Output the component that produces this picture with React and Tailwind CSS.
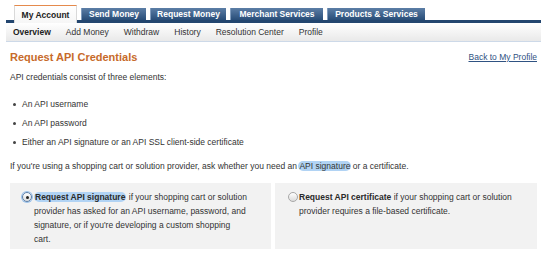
const tabs = [
  { label: "Send Money", w: "w-[65px]" },
  { label: "Request Money", w: "w-[76px]" },
  { label: "Merchant Services", w: "w-[93px]" },
  { label: "Products & Services", w: "w-[98px]" },
];

const subnav = ["Add Money", "Withdraw", "History", "Resolution Center", "Profile"];

const bullets = [
  "An API username",
  "An API password",
  "Either an API signature or an API SSL client-side certificate",
];

function Radio({ checked }) {
  return (
    <span
      className={
        "mt-[2px] flex h-[10px] w-[10px] shrink-0 items-center justify-center rounded-full border bg-gradient-to-b from-white to-[#dcdcdc] " +
        (checked
          ? "border-[#5c7fa8] shadow-[0_0_0_1px_#9cc3ec]"
          : "border-[#a8a8a8]")
      }
    >
      {checked && <span className="h-[3px] w-[3px] rounded-full bg-[#222]" />}
    </span>
  );
}

export default function App() {
  return (
    <div className="h-[257px] w-[550px] overflow-hidden bg-white font-['Liberation_Sans',Arial,sans-serif] text-[#333]">
      <div className="w-[535px] ml-[6px] pt-[5px]">
        <div className="flex h-[18px] items-end gap-[4px] border-b-[3px] border-[#23466f] pl-[8px]">
          <div className="relative z-10 -mb-[3px] h-[18px] w-[63px] border-t border-x border-t-[#e58a4c] border-x-[#d9d9d9] bg-gradient-to-b from-white to-[#f6f6f6] pt-[3px] text-center text-[8.5px] font-bold leading-[12px] text-[#222]">
            My Account
          </div>
          {tabs.map((t) => (
            <div
              key={t.label}
              className={
                t.w +
                " h-[12px] border-l border-[#7f9bbd] bg-gradient-to-b from-[#5c7ea6] to-[#284d78] text-center text-[8.5px] font-bold leading-[13px] text-white"
              }
            >
              {t.label}
            </div>
          ))}
        </div>
        <div className="flex h-[19px] items-center gap-[15px] border-b border-[#cdd9e8] bg-gradient-to-b from-white to-[#e9e9e9] pl-[7px] text-[8.5px] leading-[12px]">
          <span className="font-bold text-[#222]">Overview</span>
          {subnav.map((s) => (
            <span key={s}>{s}</span>
          ))}
        </div>
      </div>

      <div className="ml-[10px] w-[528px]">
        <div className="mt-[8px] flex items-center justify-between">
          <h1 className="text-[11px] font-bold leading-[14px] text-[#c76a2a]">
            Request API Credentials
          </h1>
          <a className="mr-[1px] text-[8.5px] leading-[12px] text-[#2f5282] underline">
            Back to My Profile
          </a>
        </div>

        <p className="mt-[7px] text-[8.5px] leading-[12px]">
          API credentials consist of three elements:
        </p>

        <ul className="mt-[15px] flex flex-col gap-[7px] text-[8.5px] leading-[12px]">
          {bullets.map((b) => (
            <li key={b} className="flex items-center pl-[3px]">
              <span className="mr-[6px] h-[3px] w-[3px] rounded-full bg-[#444]" />
              {b}
            </li>
          ))}
        </ul>

        <p className="mt-[12px] text-[8.5px] leading-[12px]">
          If you're using a shopping cart or solution provider, ask whether you need an{" "}
          <span className="-mx-[1px] rounded-[5px] bg-[#b1d3f4] px-[1px]">API signature</span> or
          a certificate.
        </p>

        <div className="mt-[11px] grid h-[66px] grid-cols-[261px_262px] gap-[4px] text-[8.5px] leading-[14px]">
          <div className="flex gap-[2px] bg-[#f2f2f2] pl-[12px] pt-[7px]">
            <Radio checked />
            <div className="w-[214px]">
              <span className="rounded-[5px] bg-[#b1d3f4] px-[1px] font-bold text-[#2a2a2a]">
                Request API signature
              </span>{" "}
              if your shopping cart or solution provider has asked for an API username,
              password, and signature, or if you're developing a custom shopping cart.
            </div>
          </div>
          <div className="flex gap-[1px] bg-[#f2f2f2] pl-[13px] pt-[7px]">
            <Radio />
            <div className="w-[225px]">
              <span className="font-bold text-[#2a2a2a]">Request API certificate</span> if your
              shopping cart or solution provider requires a file-based certificate.
            </div>
          </div>
        </div>
      </div>
    </div>
  );
}
